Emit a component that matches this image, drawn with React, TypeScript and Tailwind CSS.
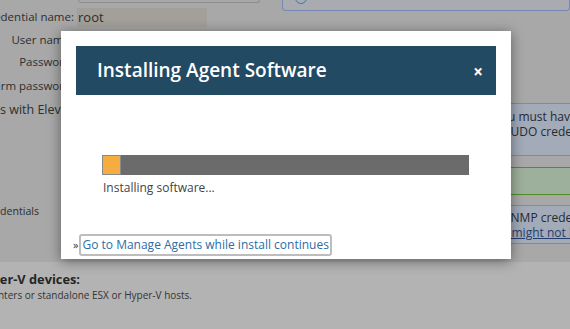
import React from "react";

export default function App() {
  const font = { fontFamily: '"Open Sans", "Noto Sans", sans-serif' };
  return (
    <div className="relative w-[570px] h-[329px] overflow-hidden bg-[#a8a8a8] text-[#2e2e2e]" style={font}>
      {/* background page */}
      <div className="flex flex-col h-full">
        <div className="relative flex h-[262px]">
          {/* labels column */}
          <div className="flex flex-col w-[74px] shrink-0 text-[11.5px] leading-[16px]">
            <div className="flex justify-end h-[24px] pt-[9px] whitespace-nowrap">Credential name:</div>
            <div className="flex justify-end h-[24px] pt-[8px] whitespace-nowrap pr-[1px]">User name:</div>
            <div className="flex justify-end h-[24px] pt-[6px] whitespace-nowrap">Password:</div>
            <div className="flex justify-end h-[24px] pt-[6px] whitespace-nowrap">Confirm password:</div>
            <div className="flex justify-start h-[24px] pt-[6px] whitespace-nowrap text-[12.5px]">s with Elevated:</div>
            <div className="flex justify-end w-[39px] mt-[83px] whitespace-nowrap text-[10.6px]">Credentials</div>
          </div>
          {/* inputs column */}
          <div className="flex flex-col w-[208px] shrink-0 pl-[3px]">
            <div className="w-[182px] h-[3px] border-x border-b border-[#8e8e8e] rounded-b-[3px] ml-[1px]" />
            <div className="w-[130px] h-[19px] mt-[5px] bg-[#a39f99] text-[13px] leading-[19px] pl-[1px]">root</div>
          </div>
          {/* right column */}
          <div className="flex flex-col flex-1 min-w-0">
            <div className="relative h-[11px] border-x border-b border-[#7689b5] rounded-b-[4px] bg-[#a9abb0] overflow-hidden">
              <div className="absolute left-[12px] -top-[8px] w-[12px] h-[12px] rounded-full border border-[#3a7fa8]" />
            </div>
            <div className="mt-[92px] ml-[200px] w-[300px] h-[53px] border-y border-[#6e8cc8] bg-[#a3aab8] text-[12px] leading-[15px] pt-[5px] whitespace-nowrap text-[#262a33]">
              <div className="pl-[12px]">You must have</div>
              <div className="pl-[22px]">SUDO credentials</div>
            </div>
            <div className="mt-[11px] ml-[200px] w-[300px] h-[28px] border-y border-[#4f8f26] bg-[#9db09b]" />
            <div className="mt-[10px] ml-[200px] w-[300px] h-[39px] border-y border-[#6e8cc8] bg-[#a3aab8] text-[12px] leading-[15px] pt-[4px] whitespace-nowrap text-[#262a33]">
              <div className="pl-[22px]">SNMP credentials</div>
              <div className="pl-[2px]">
                <span className="underline text-[#233e6e]">they might not be</span>
              </div>
            </div>
          </div>
        </div>
        <div className="flex-1 bg-[#b3b3b3] pt-[9px] whitespace-nowrap">
          <div className="text-[12.8px] leading-[16px] font-bold text-[#262626] flex justify-end w-[80px]">Hyper-V devices:</div>
          <div className="text-[10px] leading-[16px] text-[#333] flex justify-end w-[192px]">vCenters or standalone ESX or Hyper-V hosts.</div>
        </div>
      </div>

      {/* modal */}
      <div className="absolute left-[61px] top-[31px] w-[450px] h-[228px] bg-white shadow-[0_2px_12px_rgba(0,0,0,0.45)] flex flex-col">
        <div className="mx-[15px] mt-[15px] h-[49px] bg-[#234a63] flex items-center justify-between pl-[21px] pr-[13px]">
          <span className="text-white text-[19px] font-semibold leading-[24px] mt-[-1px]">Installing Agent Software</span>
          <span className="text-white text-[17px] font-bold leading-none mt-[2px]">×</span>
        </div>
        <div className="pl-[41px] pt-[60px]">
          <div className="w-[367px] h-[20px] bg-[#6b6b6b] flex">
            <div className="w-[19px] h-[20px] bg-[#f5ad42] border border-[#8a8a8a]" />
          </div>
          <div className="mt-[5px] text-[12px] leading-[16px] text-[#444] pl-[1px]">Installing software...</div>
        </div>
        <div className="flex items-center mt-[38px] pl-[12px] text-[12px] leading-[18px]">
          <span className="text-[#333] text-[11px] mr-[1px]">»</span>
          <a className="border-2 border-[#bdbdbd] rounded-[3px] px-[1px] text-[#2f6ca3]" href="#">
            Go to Manage Agents while install continues
          </a>
        </div>
      </div>
    </div>
  );
}
